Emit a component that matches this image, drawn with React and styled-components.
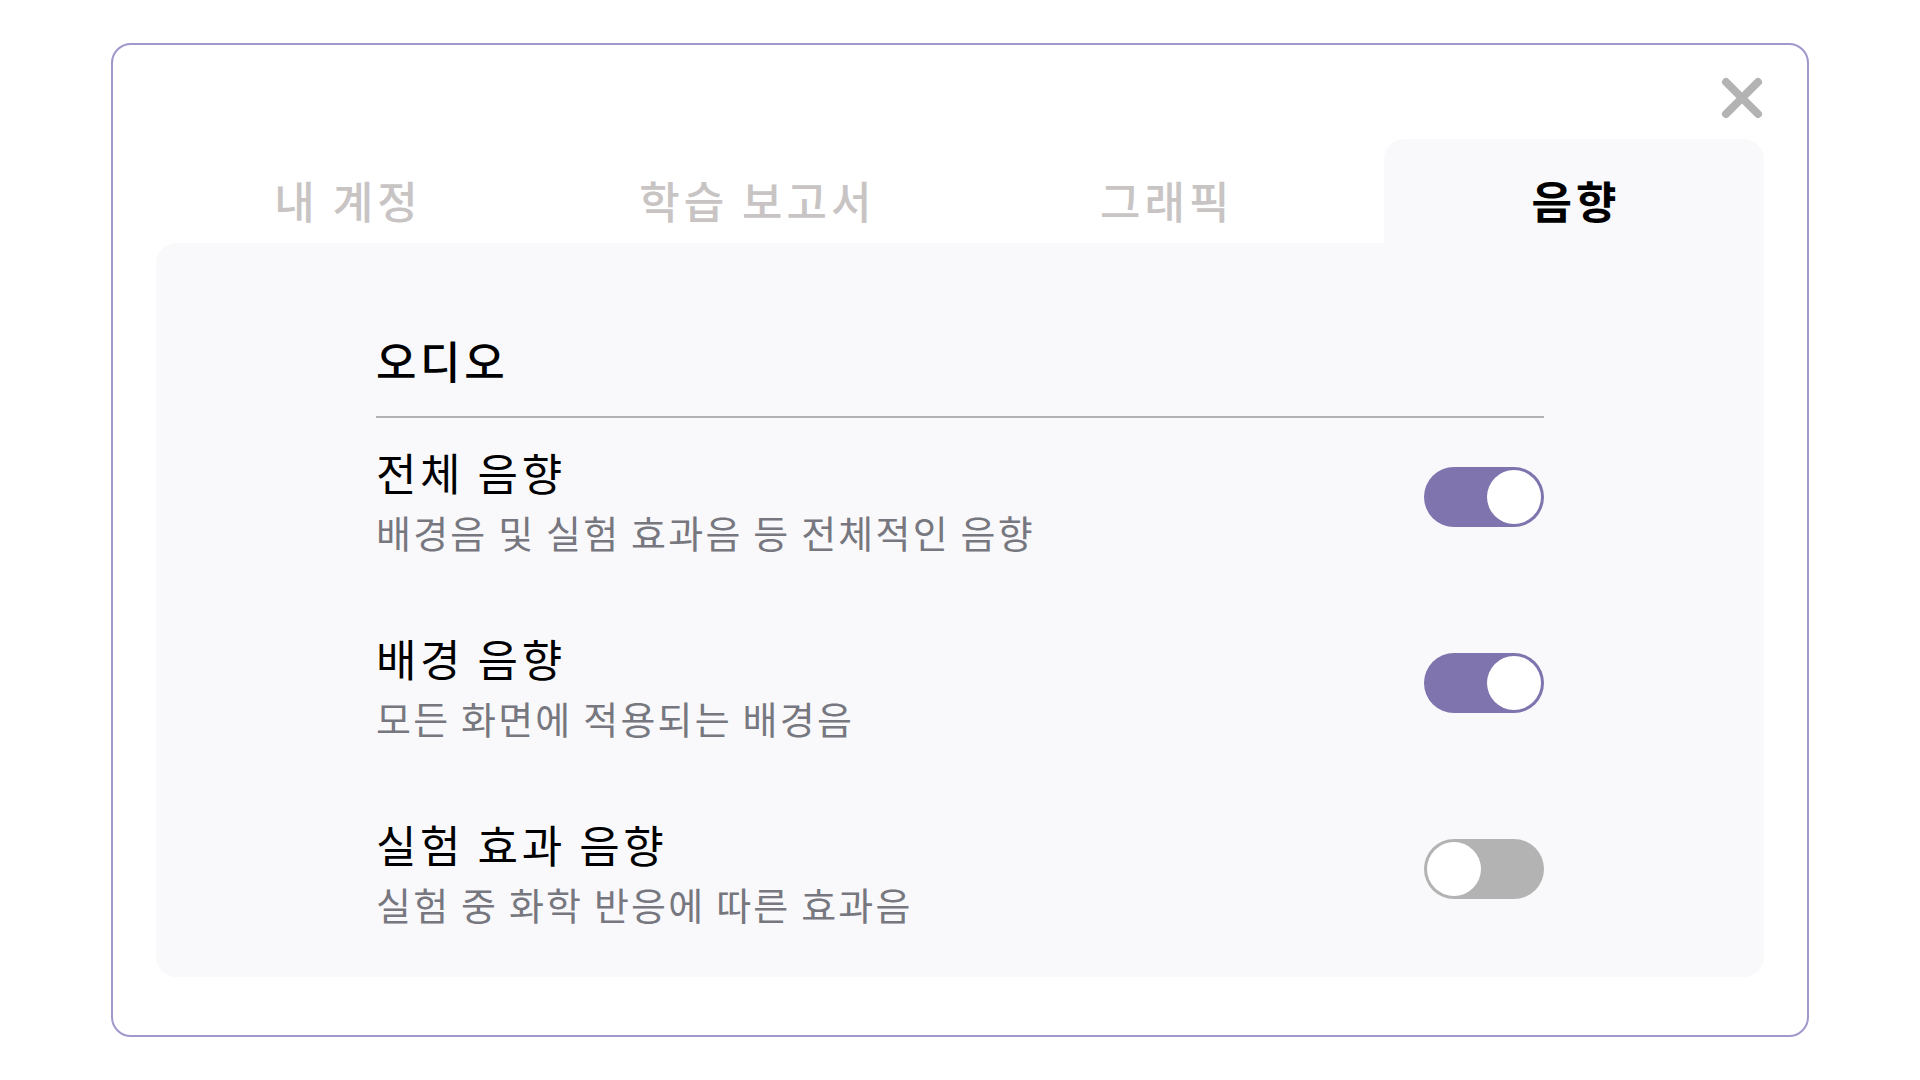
import React, { useState } from 'react';
import styled, { createGlobalStyle } from 'styled-components';

const GlobalStyle = createGlobalStyle`
  html, body {
    margin: 0;
    padding: 0;
    background: #ffffff;
  }
  body {
    font-family: "Noto Sans CJK KR", "Noto Sans", sans-serif;
  }
`;

const Page = styled.div`
  width: 1920px;
  height: 1080px;
  display: flex;
  align-items: center;
  justify-content: center;
`;

const Modal = styled.div`
  box-sizing: border-box;
  width: 1698px;
  height: 994px;
  border: 2px solid #a098cd;
  border-radius: 20px;
  background: #ffffff;
  padding: 32px 43px 58px;
  display: flex;
  flex-direction: column;
`;

const CloseRow = styled.div`
  display: flex;
  justify-content: flex-end;
  margin-bottom: 20px;
`;

const CloseButton = styled.button`
  width: 42px;
  height: 42px;
  padding: 0;
  margin-right: 1px;
  border: none;
  background: none;
  cursor: pointer;
  display: block;
`;

const TabBar = styled.div`
  display: flex;
  justify-content: space-between;
  height: 104px;
`;

const Tab = styled.button`
  box-sizing: border-box;
  width: 380px;
  height: 104px;
  padding: 39px 0 0 4px;
  border: none;
  border-radius: 20px 20px 0 0;
  background: ${(p) => (p.active ? '#f9f9fb' : 'transparent')};
  color: ${(p) => (p.active ? '#000000' : '#c8c4c4')};
  font-family: "Noto Sans CJK KR", "Noto Sans", sans-serif;
  font-size: 44px;
  font-weight: ${(p) => (p.active ? 700 : 500)};
  letter-spacing: 4px;
  line-height: 1;
  text-align: center;
  cursor: pointer;
  display: flex;
  justify-content: center;
  align-items: flex-start;
`;

const Panel = styled.div`
  flex: 1;
  background: #f9f9fb;
  border-radius: 20px 0 20px 20px;
  padding: 95px 220px 54px;
  display: flex;
  flex-direction: column;
`;

const SectionTitle = styled.h2`
  margin: 0;
  font-size: 44px;
  font-weight: 500;
  letter-spacing: 3.6px;
  line-height: 1;
  color: #000000;
`;

const Divider = styled.hr`
  margin: 34px 0 32px;
  height: 2px;
  border: none;
  background: #b3b3b3;
`;

const Rows = styled.div`
  display: flex;
  flex-direction: column;
  gap: 85px;
`;

const Row = styled.div`
  display: flex;
  align-items: center;
  justify-content: space-between;
`;

const TextBlock = styled.div`
  display: flex;
  flex-direction: column;
  gap: 19px;
`;

const RowTitle = styled.div`
  font-size: 44px;
  letter-spacing: 3.6px;
  line-height: 1;
  color: #000000;
`;

const RowDesc = styled.div`
  font-size: 38px;
  letter-spacing: 2.2px;
  line-height: 1;
  color: #77777f;
`;

const Switch = styled.button`
  position: relative;
  width: 120px;
  height: 60px;
  padding: 0;
  border: none;
  border-radius: 30px;
  background: ${(p) => (p.on ? '#7f74ae' : '#b3b3b3')};
  cursor: pointer;
  flex-shrink: 0;
  margin-top: -8px;

  &::after {
    content: '';
    position: absolute;
    top: 3px;
    left: ${(p) => (p.on ? '63px' : '3px')};
    width: 54px;
    height: 54px;
    border-radius: 50%;
    background: #ffffff;
    transition: left 0.2s;
  }
`;

const TABS = ['내 계정', '학습 보고서', '그래픽', '음향'];

const SETTINGS = [
  { key: 'all', title: '전체 음향', desc: '배경음 및 실험 효과음 등 전체적인 음향', on: true },
  { key: 'bgm', title: '배경 음향', desc: '모든 화면에 적용되는 배경음', on: true },
  { key: 'fx', title: '실험 효과 음향', desc: '실험 중 화학 반응에 따른 효과음', on: false },
];

const CloseIcon = () => (
  <svg width="42" height="42" viewBox="0 0 42 42">
    <path
      d="M5 5 L37 37 M37 5 L5 37"
      stroke="#b3b3b3"
      strokeWidth="8"
      strokeLinecap="round"
      fill="none"
    />
  </svg>
);

const App = () => {
  const [selectedTab, setSelectedTab] = useState(3);
  const [values, setValues] = useState(() =>
    SETTINGS.reduce((acc, s) => ({ ...acc, [s.key]: s.on }), {}),
  );

  return (
    <>
      <GlobalStyle />
      <Page>
        <Modal>
          <CloseRow>
            <CloseButton aria-label="닫기">
              <CloseIcon />
            </CloseButton>
          </CloseRow>
          <TabBar>
            {TABS.map((label, i) => (
              <Tab key={label} active={selectedTab === i} onClick={() => setSelectedTab(i)}>
                {label}
              </Tab>
            ))}
          </TabBar>
          <Panel>
            <SectionTitle>오디오</SectionTitle>
            <Divider />
            <Rows>
              {SETTINGS.map((s) => (
                <Row key={s.key}>
                  <TextBlock>
                    <RowTitle>{s.title}</RowTitle>
                    <RowDesc>{s.desc}</RowDesc>
                  </TextBlock>
                  <Switch
                    on={values[s.key]}
                    onClick={() => setValues((v) => ({ ...v, [s.key]: !v[s.key] }))}
                  />
                </Row>
              ))}
            </Rows>
          </Panel>
        </Modal>
      </Page>
    </>
  );
};

export default App;
